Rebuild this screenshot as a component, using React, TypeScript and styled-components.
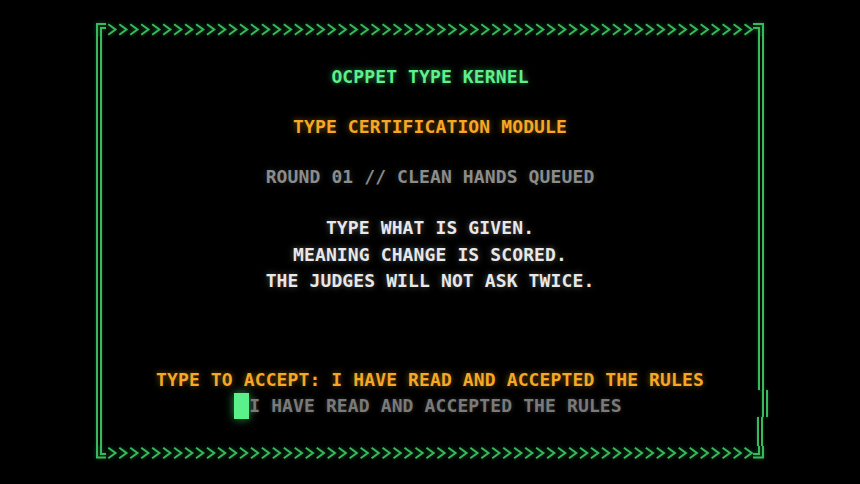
import styled, { createGlobalStyle } from "styled-components";

const GlobalStyle = createGlobalStyle`
  html, body {
    margin: 0;
    padding: 0;
    background: #000;
  }
  body {
    width: 860px;
    height: 484px;
    overflow: hidden;
    font-family: "DejaVu Sans Mono", "Liberation Mono", monospace;
  }
`;

const RAIL = "#38b95b";
const STEP = 10.97;
const CHEVRONS = 59;

const Screen = styled.div`
  width: 860px;
  height: 484px;
  padding-top: 22px;
  box-sizing: border-box;
  background: #000;
`;

const Frame = styled.div`
  width: 670px;
  margin-left: 95px;
  display: flex;
  flex-direction: column;
`;

const Edge = styled.svg`
  display: block;
  width: 670px;
  height: 14px;
  overflow: visible;
  filter: drop-shadow(0 0 2px rgba(60, 200, 100, 0.45));
`;

const Middle = styled.div`
  height: 410px;
  display: flex;
`;

const LeftRail = styled.div`
  width: 6px;
  margin-left: 1px;
  box-sizing: border-box;
  border-left: 2px solid ${RAIL};
  border-right: 2px solid ${RAIL};
  box-shadow: 0 0 3px rgba(60, 200, 100, 0.35);
`;

const RightRail = styled.div`
  width: 6px;
  margin-right: 1px;
  display: flex;
  flex-direction: column;
`;

const RailPiece = styled.div<{ $h?: number; $shift?: number }>`
  flex: ${(p) => (p.$h ? `0 0 ${p.$h}px` : "1")};
  box-sizing: border-box;
  border-left: 2px solid ${RAIL};
  border-right: 2px solid ${RAIL};
  transform: translateX(${(p) => p.$shift ?? 0}px);
  box-shadow: 0 0 3px rgba(60, 200, 100, 0.35);
`;

const Content = styled.div`
  flex: 1;
  padding-top: 28px;
  display: flex;
  flex-direction: column;
  align-items: center;
  font-size: 18px;
  font-weight: bold;
  letter-spacing: 0.12px;
  line-height: 26px;
  white-space: pre;
`;

const Line = styled.div<{ $color: string; $glow: string; $gap?: number }>`
  color: ${(p) => p.$color};
  margin-top: ${(p) => p.$gap ?? 0}px;
  text-shadow: 0 0 6px ${(p) => p.$glow};
`;

const Rules = styled.div`
  margin-top: 25px;
  line-height: 26.5px;
  text-align: center;
  color: #e8e8e8;
  text-shadow: 0 0 6px rgba(255, 255, 255, 0.35);
`;

const InputRow = styled.div`
  display: flex;
  align-items: center;
  height: 26px;
  margin-left: -4px;
  color: #7a7a7a;
  text-shadow: 0 0 4px rgba(160, 160, 160, 0.3);
`;

const Cursor = styled.span`
  display: inline-block;
  width: 15px;
  height: 26px;
  background: #5cf08a;
  box-shadow: 0 0 10px rgba(92, 240, 138, 0.6);
`;

function chevrons(top: number) {
  return Array.from({ length: CHEVRONS }, (_, i) => {
    const x = 13.3 + i * STEP;
    return (
      <polyline
        key={i}
        points={`${x},${top} ${x + 7.2},${top + 5.2} ${x},${top + 10.4}`}
        fill="none"
        stroke={RAIL}
        strokeWidth={2}
      />
    );
  });
}

function TopEdge() {
  return (
    <Edge viewBox="0 0 670 14">
      <g fill="none" stroke={RAIL} strokeWidth={2}>
        <path d="M2 14 V2 H11" />
        <path d="M6 14 V6 H11" />
        <path d="M668 14 V2 H658" />
        <path d="M664 14 V6 H658" />
      </g>
      {chevrons(2.3)}
    </Edge>
  );
}

function BottomEdge() {
  return (
    <Edge viewBox="0 0 670 14">
      <g fill="none" stroke={RAIL} strokeWidth={2}>
        <path d="M2 0 V11.5 H11" />
        <path d="M6 0 V8 H11" />
        <path d="M668 0 V11.5 H658" />
        <path d="M664 0 V8 H658" />
      </g>
      {chevrons(1.8)}
    </Edge>
  );
}

export default function App() {
  return (
    <>
      <GlobalStyle />
      <Screen>
        <Frame>
          <TopEdge />
          <Middle>
            <LeftRail />
            <Content>
              <Line $color="#5ef08c" $glow="rgba(94, 240, 140, 0.55)">
                OCPPET TYPE KERNEL
              </Line>
              <Line $color="#f6a825" $glow="rgba(246, 168, 37, 0.5)" $gap={24}>
                TYPE CERTIFICATION MODULE
              </Line>
              <Line $color="#8c8c8c" $glow="rgba(140, 140, 140, 0.3)" $gap={24}>
                ROUND 01 // CLEAN HANDS QUEUED
              </Line>
              <Rules>
                <div>TYPE WHAT IS GIVEN.</div>
                <div>MEANING CHANGE IS SCORED.</div>
                <div>THE JUDGES WILL NOT ASK TWICE.</div>
              </Rules>
              <Line $color="#f6a825" $glow="rgba(246, 168, 37, 0.5)" $gap={72.5}>
                TYPE TO ACCEPT: I HAVE READ AND ACCEPTED THE RULES
              </Line>
              <InputRow>
                <Cursor />
                <span>I HAVE READ AND ACCEPTED THE RULES</span>
              </InputRow>
            </Content>
            <RightRail>
              <RailPiece />
              <RailPiece $h={27} $shift={4} />
              <RailPiece $h={29} $shift={-1} />
            </RightRail>
          </Middle>
          <BottomEdge />
        </Frame>
      </Screen>
    </>
  );
}
